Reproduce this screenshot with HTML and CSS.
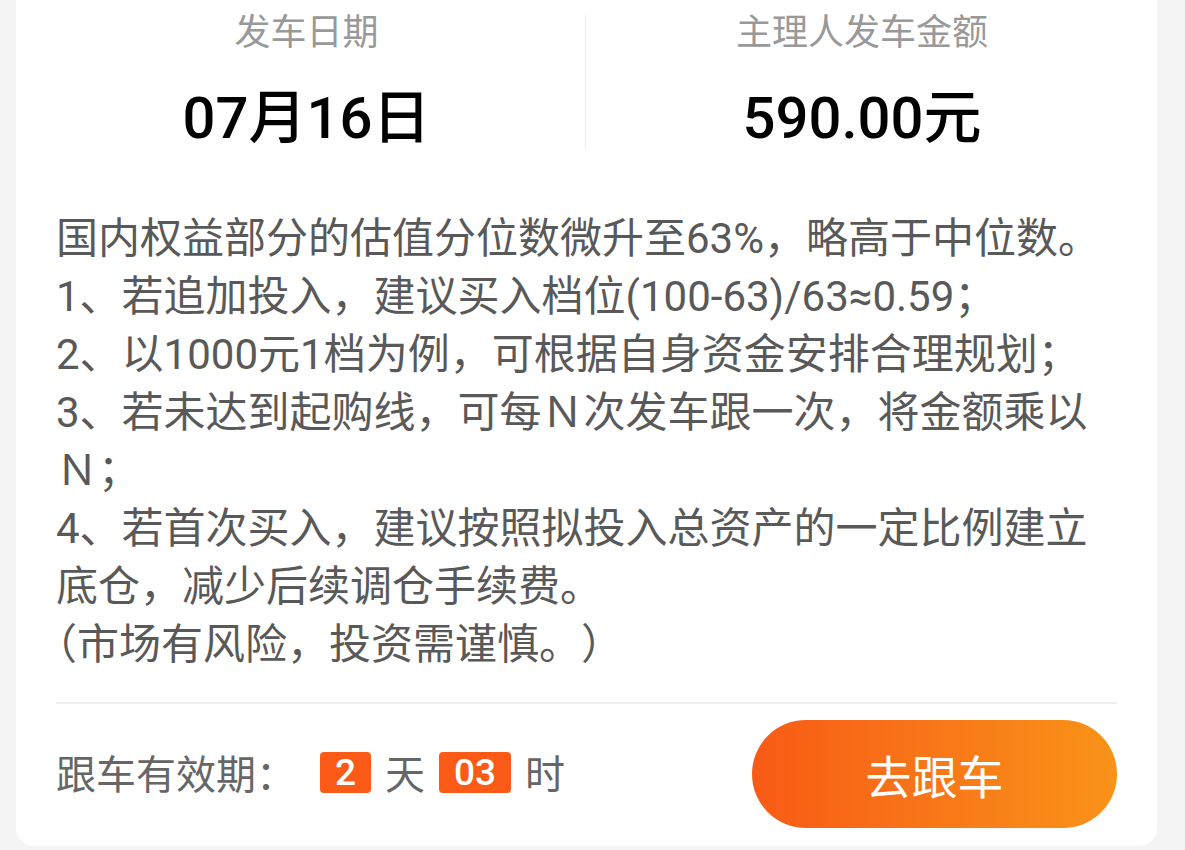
FILE: index.html
```html
<!DOCTYPE html>
<html lang="zh-CN">
<head>
  <meta charset="UTF-8">
  <meta name="viewport" content="width=device-width, initial-scale=1.0">
  <title>发车详情</title>
  <link rel="stylesheet" href="styles.css">
</head>
<body>
<div class="card">
  <!-- 发车信息 -->
  <div class="summary">
    <div class="summary-item">
      <div class="summary-label">发车日期</div>
      <div class="summary-value">07月16日</div>
    </div>
    <div class="summary-divider"></div>
    <div class="summary-item">
      <div class="summary-label">主理人发车金额</div>
      <div class="summary-value">590.00元</div>
    </div>
  </div>

  <!-- 说明 -->
  <div class="note">
    <p>国内权益部分的估值分位数微升至63%，略高于中位数。</p>
    <p>1、若追加投入，建议买入档位(100-63)/63≈0.59；</p>
    <p>2、以1000元1档为例，可根据自身资金安排合理规划；</p>
    <p>3、若未达到起购线，可每Ｎ次发车跟一次，将金额乘以Ｎ；</p>
    <p>4、若首次买入，建议按照拟投入总资产的一定比例建立底仓，减少后续调仓手续费。</p>
    <p>（市场有风险，投资需谨慎<span class="no-trim">。）</span></p>
  </div>

  <!-- 跟车 -->
  <div class="footer">
    <div class="countdown">
      <span class="countdown-label">跟车有效期：</span>
      <span class="countdown-num">2</span>
      <span class="countdown-unit">天</span>
      <span class="countdown-num">03</span>
      <span class="countdown-unit">时</span>
    </div>
    <button class="follow-btn">去跟车</button>
  </div>
</div>
</body>
</html>
```

FILE: styles.css
```css
body {
  font-family: Roboto, "Noto Sans CJK SC", sans-serif;
  margin: 0;
  padding: 0;
  background-color: #f4f4f4;
}
.card {
  margin: 0 28px 4px 16px;
  padding: 0 40px;
  background: white;
  border-radius: 0 0 18px 18px;
}
.summary {
  display: grid;
  grid-template-columns: 557px 1px 1fr;
  margin: 0 -21px 0 -28px;
  padding-top: 11px;
}
.summary-item {
  text-align: center;
}
.summary-label {
  font-size: 36px;
  line-height: 44px;
  color: #999;
}
.summary-value {
  margin-top: 27px;
  font-size: 58px;
  line-height: 72px;
  font-weight: 500;
  color: #000;
}
.summary-divider {
  margin-top: 4px;
  height: 133px;
  background: #eee;
}
.note {
  margin-top: 56px;
  padding-bottom: 28px;
  border-bottom: 2px solid #f0f0f0;
  font-size: 42px;
  line-height: 58px;
  color: #595959;
  text-spacing-trim: trim-start;
}
.note p {
  margin: 0;
}
.note .no-trim {
  text-spacing-trim: space-all;
}
.footer {
  display: flex;
  align-items: center;
  justify-content: space-between;
  padding: 16px 0 18px;
}
.countdown {
  display: flex;
  align-items: center;
  margin-top: -4px;
  font-size: 40px;
  color: #666;
}
.countdown-label {
  margin-right: 24px;
}
.countdown-num {
  height: 41px;
  padding: 0 15px;
  border-radius: 4px;
  background: #fb5b17;
  color: white;
  font-size: 37px;
  font-weight: 500;
  line-height: 41px;
}
.countdown-unit {
  margin: 0 14px;
}
.follow-btn {
  width: 365px;
  height: 108px;
  border: none;
  border-radius: 54px;
  background: linear-gradient(to right, #f85a16, #f99319);
  color: white;
  font-family: inherit;
  font-size: 46px;
  cursor: pointer;
}
```
